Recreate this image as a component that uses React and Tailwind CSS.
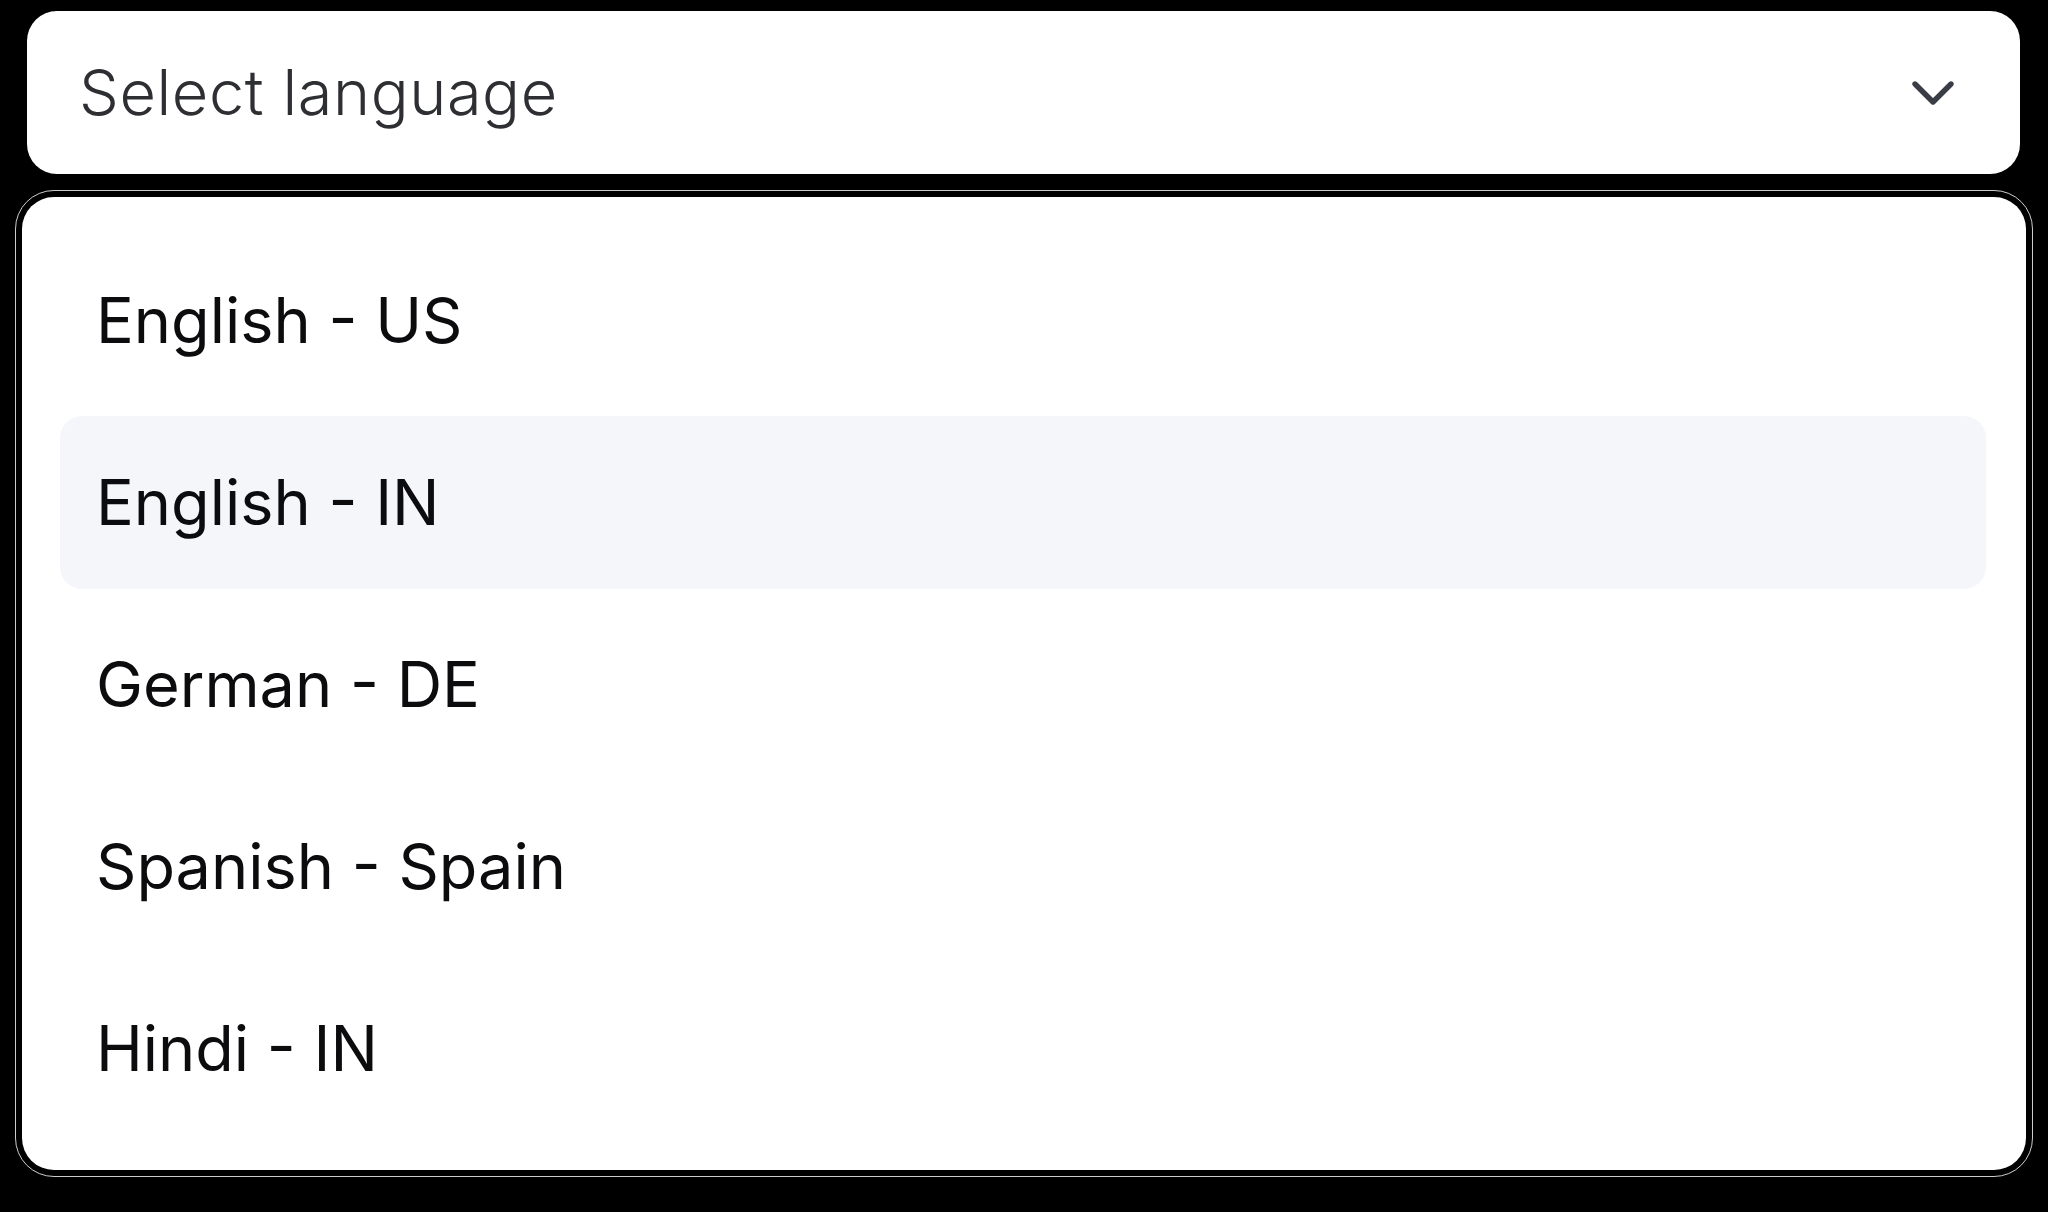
import React from 'react';
import { ChevronDown } from 'lucide-react';

const LANGUAGES = ['English - US', 'English - IN', 'German - DE', 'Spanish - Spain', 'Hindi - IN'];

const App = () => {
    const highlighted = 1;

    return (
        <div className="w-[2048px] h-[1212px] bg-black overflow-hidden" style={{ fontFamily: 'Inter, "Liberation Sans", sans-serif' }}>
            {/* trigger */}
            <div className="mt-[11px] ml-[27px] w-[1993px] h-[163px] rounded-[30px] bg-white flex items-center justify-between pl-[52px] pr-[51px]">
                <span className="text-[63px] font-light leading-none text-[#2e2f33] tracking-[0.6px]">Select language</span>
                <ChevronDown size={72} strokeWidth={1.8} className="text-[#3a3d45]" />
            </div>

            {/* menu */}
            <div className="mt-[23px] ml-[22px] w-[2004px] h-[973px] rounded-[32px] bg-white outline-1 outline-offset-[6px] outline-white/80 pt-[37px] pl-[38px] pr-[40px] flex flex-col gap-[9px]">
                {LANGUAGES.map((lang, i) => (
                    <div
                        key={lang}
                        className={`h-[173px] shrink-0 flex items-center pl-[36px] rounded-[22px] ${i === highlighted ? 'bg-[#f5f6f9]' : ''}`}
                    >
                        <span className="text-[63px] leading-none text-[#0c0c0e]">{lang}</span>
                    </div>
                ))}
            </div>
        </div>
    );
};

export default App;
